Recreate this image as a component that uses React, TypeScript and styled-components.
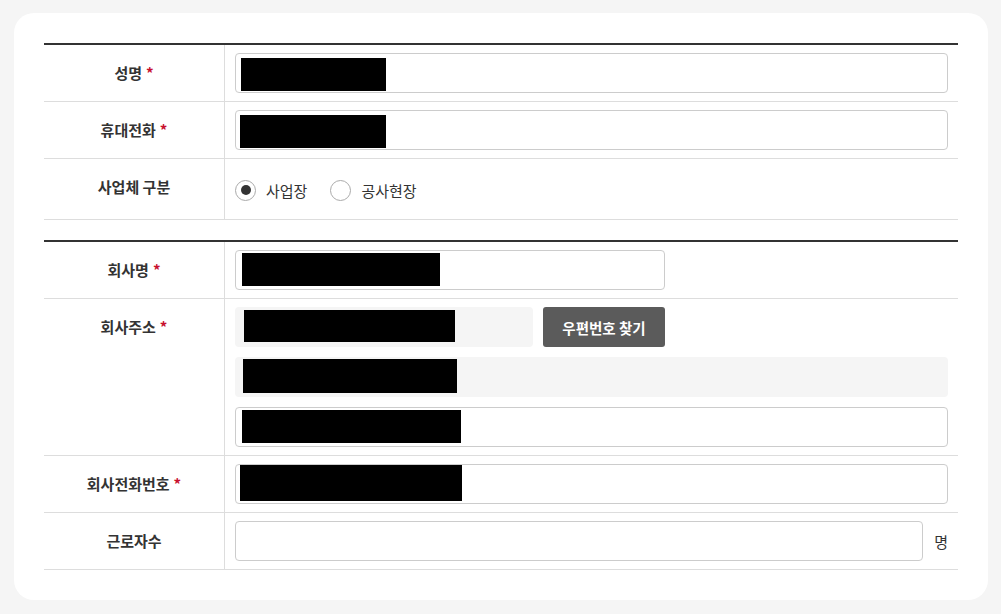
import React from "react";
import styled, { createGlobalStyle } from "styled-components";

const Global = createGlobalStyle`
  html, body { margin: 0; padding: 0; background: #f5f5f5; }
  body { font-family: "Noto Sans CJK KR", "Noto Sans", sans-serif; color: #333; }
  * { box-sizing: border-box; }
`;

const Card = styled.div`
  margin: 13px 0 0 14px;
  width: 974px;
  height: 587px;
  background: #fff;
  border-radius: 20px;
  padding: 30px;
`;

const Table = styled.div<{ $gap?: number }>`
  border-top: 2px solid #333;
  margin-top: ${(p) => p.$gap ?? 0}px;
`;

const Row = styled.div<{ $min?: number }>`
  display: grid;
  grid-template-columns: 181px 1fr;
  border-bottom: 1px solid #ddd;
  min-height: ${(p) => p.$min ?? 56}px;
`;

const Label = styled.div`
  border-right: 1px solid #ddd;
  text-align: center;
  font-size: 15px;
  font-weight: 700;
  line-height: 20px;
  padding-top: 18px;
  color: #333;
`;

const Star = styled.span`
  color: #c8102e;
  margin-left: 4px;
`;

const Value = styled.div`
  padding: 8px 10px;
  display: flex;
  flex-direction: column;
  gap: 10px;
  justify-content: center;
`;

const Line = styled.div`
  display: flex;
  align-items: center;
  gap: 10px;
`;

const Field = styled.div<{ $w?: number; $gray?: boolean; $grow?: boolean }>`
  position: relative;
  height: 40px;
  flex: ${(p) => (p.$grow ? "1 1 auto" : "none")};
  width: ${(p) => (p.$w ? `${p.$w}px` : "auto")};
  border: ${(p) => (p.$gray ? "none" : "1px solid #ccc")};
  background: ${(p) => (p.$gray ? "#f5f5f5" : "#fff")};
  border-radius: 4px;
`;

const Mask = styled.span<{ $l: number; $t: number; $w: number; $h: number }>`
  position: absolute;
  left: ${(p) => p.$l}px;
  top: ${(p) => p.$t}px;
  width: ${(p) => p.$w}px;
  height: ${(p) => p.$h}px;
  background: #000;
`;

const Button = styled.button`
  width: 122px;
  height: 40px;
  flex: none;
  border: none;
  border-radius: 3px;
  background: #5b5b5b;
  color: #fff;
  font-family: inherit;
  font-size: 14.5px;
  font-weight: 700;
  padding: 0;
`;

const Unit = styled.span`
  font-size: 15px;
  color: #333;
  margin-left: 1px;
`;

const RadioGroup = styled.div`
  display: flex;
  align-items: center;
  height: 44px;
  gap: 23px;
  padding-top: 2px;
`;

const RadioItem = styled.label`
  display: flex;
  align-items: center;
  gap: 10px;
  font-size: 15px;
  color: #333;
`;

const Circle = styled.span<{ $on?: boolean }>`
  width: 21px;
  height: 21px;
  border-radius: 50%;
  border: 1px solid #aaa;
  display: flex;
  align-items: center;
  justify-content: center;
  &::after {
    content: "";
    width: 10px;
    height: 10px;
    border-radius: 50%;
    background: ${(p) => (p.$on ? "#333" : "transparent")};
  }
`;

export default function App() {
  return (
    <>
      <Global />
      <Card>
        <Table>
          <Row>
            <Label>
              성명<Star>*</Star>
            </Label>
            <Value>
              <Field>
                <Mask $l={5} $t={4} $w={145} $h={33} />
              </Field>
            </Value>
          </Row>
          <Row>
            <Label>
              휴대전화<Star>*</Star>
            </Label>
            <Value>
              <Field>
                <Mask $l={4} $t={4} $w={146} $h={33} />
              </Field>
            </Value>
          </Row>
          <Row $min={60}>
            <Label>사업체 구분</Label>
            <Value>
              <RadioGroup>
                <RadioItem>
                  <Circle $on />
                  사업장
                </RadioItem>
                <RadioItem>
                  <Circle />
                  공사현장
                </RadioItem>
              </RadioGroup>
            </Value>
          </Row>
        </Table>
        <Table $gap={20}>
          <Row>
            <Label>
              회사명<Star>*</Star>
            </Label>
            <Value>
              <Field $w={430}>
                <Mask $l={6} $t={2} $w={198} $h={33} />
              </Field>
            </Value>
          </Row>
          <Row>
            <Label>
              회사주소<Star>*</Star>
            </Label>
            <Value>
              <Line>
                <Field $w={298} $gray>
                  <Mask $l={9} $t={3} $w={211} $h={32} />
                </Field>
                <Button>우편번호 찾기</Button>
              </Line>
              <Field $gray>
                <Mask $l={8} $t={2} $w={214} $h={34} />
              </Field>
              <Field>
                <Mask $l={6} $t={2} $w={219} $h={33} />
              </Field>
            </Value>
          </Row>
          <Row>
            <Label>
              회사전화번호<Star>*</Star>
            </Label>
            <Value>
              <Field>
                <Mask $l={4} $t={0} $w={222} $h={36} />
              </Field>
            </Value>
          </Row>
          <Row>
            <Label>근로자수</Label>
            <Value>
              <Line>
                <Field $grow />
                <Unit>명</Unit>
              </Line>
            </Value>
          </Row>
        </Table>
      </Card>
    </>
  );
}
